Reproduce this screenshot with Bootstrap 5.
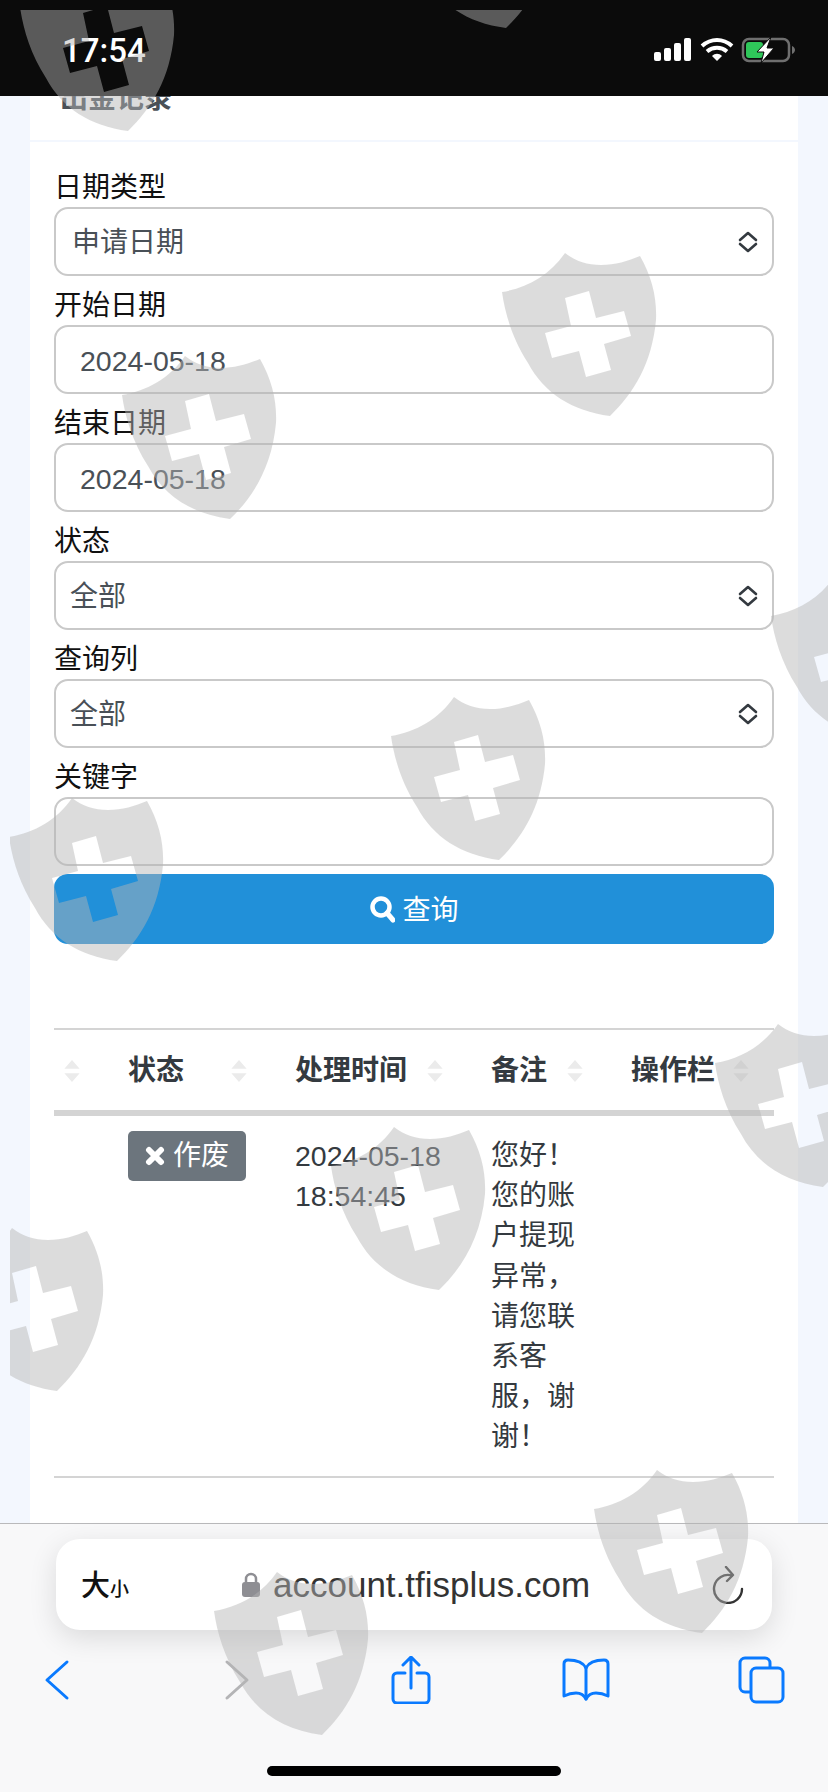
<!DOCTYPE html>
<html lang="zh-CN">
<head>
  <meta charset="UTF-8">
  <title>出金记录</title>
  <link href="https://cdn.jsdelivr.net/npm/bootstrap@5.3.0/dist/css/bootstrap.min.css" rel="stylesheet">
  <style>
    html, body { height: 1792px; }
    body {
      background: #f3f7fe;
      font-family: "Liberation Sans", "Noto Sans CJK SC", sans-serif;
      font-size: 28px;
      line-height: 40.5px;
      color: #212529;
      overflow: hidden;
    }
    .statusbar { height: 96px; background: #0b0b0b; color: #fff; flex: none; padding: 31px 32px 0 62px; }
    .statusicons { margin-top: 6px; }
    .clock { font-family: Roboto, "Liberation Sans", sans-serif; font-size: 33px; font-weight: 500; line-height: 40px; }
    .pagearea { flex: 1 1 0; min-height: 0; overflow: hidden; padding: 0 30px; }
    .recordcard { border: 0; border-radius: 0; height: 100%; }
    .recordhead {
      height: 46px; padding: 0 30px 21px; background: #fff; flex: none;
      border-bottom: 2px solid #f3f7fe; border-radius: 0 !important;
      font-weight: 700; color: #495057; font-size: 28px;
    }
    .recordform { padding: 24px 24px 0; }
    .fieldlabel { display: block; margin: 0; height: 41px; line-height: 43px; color: #111; font-size: 28px; }
    .fieldbox {
      height: 69px; margin-bottom: 8px; border: 2px solid #c9c9c9; border-radius: 14px;
      font-size: 28px; color: #495057; padding: 3px 16px 0;
    }
    select.fieldbox {
      background-image: url("data:image/svg+xml,%3csvg xmlns='http://www.w3.org/2000/svg' viewBox='0 0 20 22'%3e%3cpath fill='none' stroke='%23343a40' stroke-width='2.6' stroke-linecap='round' stroke-linejoin='round' d='M2 9l8-7 8 7M2 13l8 7 8-7'/%3e%3c/svg%3e");
      background-position: right 14px center; background-size: 20px 22px;
    }
    select.plainsel { padding-left: 14px; }
    .datefield { padding-left: 24px; font-size: 28.5px; }
    .querybtn {
      height: 70px; margin-top: 2px; width: 100%; background: #2190d9; border: 0; border-radius: 14px;
      color: #fff; font-size: 28px; display: flex; align-items: center; justify-content: center; gap: 7px; padding-top: 9px;
    }
    .querybtn svg { margin-top: -4px; }
    .tablewrap { margin: 84px 24px 0; overflow: hidden; }
    .recordtable { table-layout: fixed; width: 731px; margin: 0; font-size: 28px; color: #343a40; border-top: 2px solid #d4d4d4; }
    .recordtable th {
      height: 84px; padding: 2px 36px 0 12px; font-weight: 700; vertical-align: middle;
      border-bottom: 6px solid #d4d4d4; white-space: nowrap; background: #fff;
    }
    .recordtable th.firstcol { padding-left: 9px; }
    .recordtable td { padding: 20px 36px 18px 12px; vertical-align: top; border-bottom: 2px solid #d4d4d4; background: #fff; line-height: 40.2px; color: #343a40; }
    .recordtable td.timecell { font-size: 28.5px; padding-right: 30px; }
    .sortmark { width: 18px; height: 24px; flex: none; margin-right: -1px; }
    .statusbadge {
      display: inline-flex; align-items: center; gap: 8px; height: 50px; margin-top: -5px; padding: 0 17px;
      background: #6c757d; color: #fff; border-radius: 5px; font-size: 28px; white-space: nowrap;
    }
    .safaribar { height: 269px; flex: none; background: #f8f8f9; border-top: 1px solid #b9b9bb; padding-top: 15px; position: relative; }
    .urlpill {
      height: 91px; margin: 0 56px; background: #fff; border-radius: 24px;
      box-shadow: 0 8px 28px rgba(0,0,0,.12); position: relative;
      padding: 0 28px 0 25px; color: #222;
    }
    .fontsize { color: #111; font-weight: 500; font-size: 29px; line-height: 1; width: 112px; padding-top: 4px; }
    .fontsize span { font-size: 19px; }
    .domain { font-size: 35px; line-height: 44px; color: #333; margin-left: 12px; }
    .navrow { padding: 26px 42px 0 35px; }
    .navslot { width: 48px; height: 48px; }
    .homebar { position: absolute; left: 267px; bottom: 16px; width: 294px; height: 10px; background: #000; border-radius: 5px; }
    .watermarks { position: absolute; top: 10px; left: 10px; width: 818px; height: 1782px; pointer-events: none; z-index: 10; }
  </style>
</head>
<body class="d-flex flex-column position-relative">

  <div class="statusbar d-flex justify-content-between">
    <div class="clock">17:54</div>
    <svg width="142" height="26" viewBox="0 0 142 26" class="statusicons">
      <g fill="#fff">
        <rect x="0" y="15" width="7" height="9" rx="2"/>
        <rect x="10" y="11" width="7" height="13" rx="2"/>
        <rect x="20" y="6" width="7" height="18" rx="2"/>
        <rect x="30" y="1" width="7" height="23" rx="2"/>
      </g>
      <g fill="none" stroke="#fff" stroke-width="4">
        <path d="M48 9c9-8 21-8 30 0"/>
        <path d="M53 14.500c6-5 14-5 20 0"/>
      </g>
      <path d="M58 19c3-3 7-3 10 0l-5 5z" fill="#fff"/>
      <rect x="89" y="2" width="46" height="22" rx="6" fill="none" stroke="#6f6f6f" stroke-width="2.500"/>
      <rect x="92" y="5" width="17" height="16" rx="3" fill="#2fc75a"/>
      <path d="M138 9c2 1 3 2.500 3 4s-1 3-3 4z" fill="#6f6f6f"/>
      <path d="M117 0L103 15h7l-3 11 13-15h-7z" fill="#fff" stroke="#0b0b0b" stroke-width="1"/>
    </svg>
  </div>

  <div class="pagearea">
    <div class="card recordcard">
      <div class="card-header recordhead d-flex align-items-end">出金记录</div>
      <form class="recordform">
        <label class="fieldlabel" for="dateType">日期类型</label>
        <select class="form-select fieldbox" id="dateType"><option>申请日期</option></select>
        <label class="fieldlabel" for="startDate">开始日期</label>
        <input class="form-control fieldbox datefield" id="startDate" type="text" value="2024-05-18">
        <label class="fieldlabel" for="endDate">结束日期</label>
        <input class="form-control fieldbox datefield" id="endDate" type="text" value="2024-05-18">
        <label class="fieldlabel" for="statusSel">状态</label>
        <select class="form-select fieldbox plainsel" id="statusSel"><option>全部</option></select>
        <label class="fieldlabel" for="columnSel">查询列</label>
        <select class="form-select fieldbox plainsel" id="columnSel"><option>全部</option></select>
        <label class="fieldlabel" for="keyword">关键字</label>
        <input class="form-control fieldbox" id="keyword" type="text">
        <button type="button" class="btn querybtn">
          <svg width="26" height="28" viewBox="0 0 26 28"><circle cx="12" cy="12" r="8.500" fill="none" stroke="#fff" stroke-width="4.500"/><path d="M18 18l6 7" stroke="#fff" stroke-width="5" stroke-linecap="round"/></svg>
          查询
        </button>
      </form>

      <div class="tablewrap">
        <table class="table recordtable">
          <colgroup>
            <col style="width:62px"><col style="width:167px"><col style="width:196px"><col style="width:140px"><col style="width:166px">
          </colgroup>
          <thead>
            <tr>
              <th class="firstcol"><div class="d-flex align-items-center"><svg class="sortmark ms-auto" viewBox="0 0 16 22"><use href="#sortIcon"/></svg></div></th>
              <th><div class="d-flex align-items-center">状态<svg class="sortmark ms-auto" viewBox="0 0 16 22"><use href="#sortIcon"/></svg></div></th>
              <th><div class="d-flex align-items-center">处理时间<svg class="sortmark ms-auto" viewBox="0 0 16 22"><use href="#sortIcon"/></svg></div></th>
              <th><div class="d-flex align-items-center">备注<svg class="sortmark ms-auto" viewBox="0 0 16 22"><use href="#sortIcon"/></svg></div></th>
              <th><div class="d-flex align-items-center">操作栏<svg class="sortmark ms-auto" viewBox="0 0 16 22"><use href="#sortIcon"/></svg></div></th>
            </tr>
          </thead>
          <tbody>
            <tr>
              <td></td>
              <td><span class="statusbadge">
                <svg width="20" height="20" viewBox="0 0 20 20"><path d="M4 4l12 12M16 4L4 16" stroke="#fff" stroke-width="6" stroke-linecap="round"/></svg>
                作废</span></td>
              <td class="timecell">2024-05-18 18:54:45</td>
              <td>您好！您的账户提现异常，请您联系客服，谢谢！</td>
              <td></td>
            </tr>
          </tbody>
        </table>
      </div>
    </div>
  </div>

  <div class="safaribar">
    <div class="urlpill d-flex align-items-center">
      <div class="fontsize">大<span>小</span></div>
      <svg width="20" height="26" viewBox="0 0 20 26" class="ms-5"><path d="M5 11V7a5 5 0 0 1 10 0v4" fill="none" stroke="#8e8e93" stroke-width="2.500"/><rect x="1" y="10" width="18" height="15" rx="3" fill="#8e8e93"/></svg>
      <div class="domain">account.tfisplus.com</div>
      <svg width="32" height="38" viewBox="0 0 32 38" class="ms-auto"><path d="M20 9.500A14 14 0 1 0 30 23" fill="none" stroke="#333" stroke-width="2.400" stroke-linecap="round"/><path d="M14 1l7 8-6 6" fill="none" stroke="#333" stroke-width="2.400" stroke-linecap="round" stroke-linejoin="round"/></svg>
    </div>
    <div class="navrow d-flex justify-content-between">
      <svg class="navslot" viewBox="0 0 48 48"><path d="M32 6L12 24l20 18" fill="none" stroke="#0a7aff" stroke-width="3" stroke-linecap="round" stroke-linejoin="round"/></svg>
      <svg class="navslot" viewBox="0 0 48 48"><path d="M16 6l20 18-20 18" fill="none" stroke="#b4b4b6" stroke-width="3" stroke-linecap="round" stroke-linejoin="round"/></svg>
      <svg class="navslot" viewBox="0 0 48 48"><g fill="none" stroke="#0a7aff" stroke-width="3" stroke-linecap="round" stroke-linejoin="round"><path d="M18 17h-8a4 4 0 0 0-4 4v22a4 4 0 0 0 4 4h28a4 4 0 0 0 4-4V21a4 4 0 0 0-4-4h-8"/><path d="M24 32V2M16 9l8-8 8 8"/></g></svg>
      <svg class="navslot" viewBox="0 0 48 48"><g fill="none" stroke="#0a7aff" stroke-width="3" stroke-linecap="round" stroke-linejoin="round"><path d="M24 12C21 6 14 4 6 4c-3 0-4 2-4 4v32c4-2 8-3 12-3 4 0 8 2 10 6 2-4 6-6 10-6 4 0 8 1 12 3V8c0-2-1-4-4-4-8 0-15 2-18 8z"/><path d="M24 12v31"/></g></svg>
      <svg class="navslot" viewBox="0 0 48 48"><g fill="none" stroke="#0a7aff" stroke-width="3" stroke-linejoin="round"><rect x="13" y="12" width="32" height="34" rx="5"/><path d="M13 36H7a5 5 0 0 1-5-5V7a5 5 0 0 1 5-5h20a5 5 0 0 1 5 5v5"/></g></svg>
    </div>
    <div class="homebar"></div>
  </div>

  <svg class="watermarks" viewBox="10 10 818 1782">
    <defs>
      <symbol id="sortIcon" viewBox="0 0 16 22"><path d="M8 1l7 8H1zM8 21l7-8H1z" fill="#ebebeb"/></symbol>
      <path id="shieldMark" fill="#b4b4b4" fill-opacity=".47" fill-rule="evenodd" d="M63 0C73 8 85 12 99 12 113 12 126 8 138 3 150 24 155 45 154 67 150 110 132 140 108 163 70 158 42 140 26 110 10 85 3 60 0 39 25 35 48 22 63 0ZM63 45L87 38 94 65 122 58 129 83 102 91 109 117 84 124 77 98 50 105 43 80 69 73Z"/>
    </defs>
    <use href="#shieldMark" x="502" y="253"/>
    <use href="#shieldMark" x="122" y="356"/>
    <use href="#shieldMark" x="391" y="697"/>
    <use href="#shieldMark" x="9" y="798"/>
    <use href="#shieldMark" x="331" y="1127"/>
    <use href="#shieldMark" x="715" y="1024"/>
    <use href="#shieldMark" x="-51" y="1228"/>
    <use href="#shieldMark" x="594" y="1470"/>
    <use href="#shieldMark" x="214" y="1572"/>
    <use href="#shieldMark" x="771" y="577"/>
    <use href="#shieldMark" x="20" y="-32"/>
    <use href="#shieldMark" x="398" y="-135"/>
  </svg>

</body>
</html>
